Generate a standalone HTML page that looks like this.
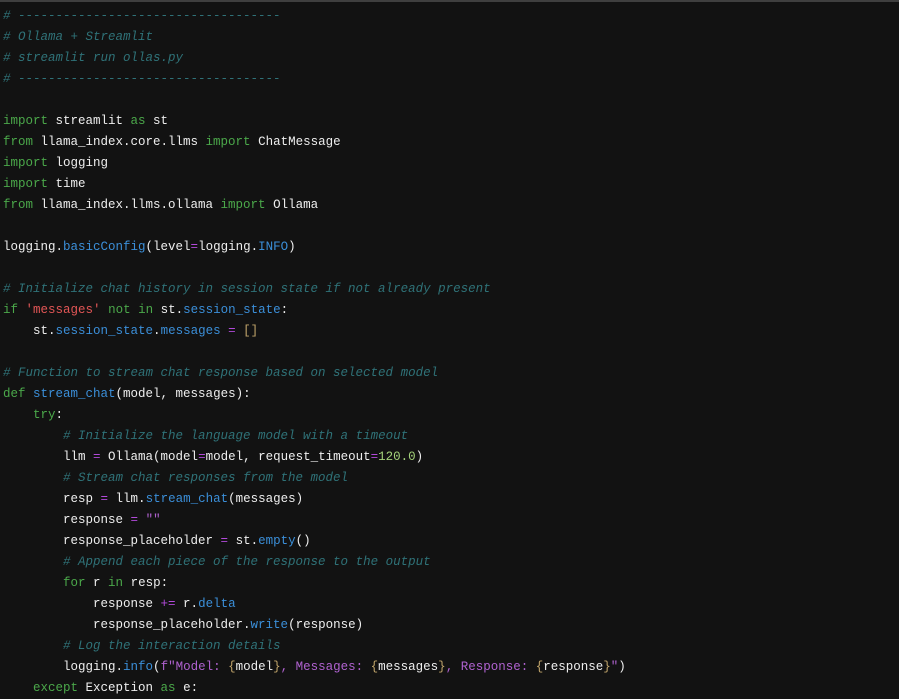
<!DOCTYPE html>
<html><head><meta charset="utf-8"><style>
html,body{margin:0;padding:0;background:#121212;width:899px;height:685px;overflow:hidden}
.top{height:2px;background:#3f3f3f}
pre{margin:0;position:absolute;left:3px;top:6px;font-family:"Liberation Mono",monospace;font-size:12.5px;line-height:21px;color:#eeeeee;letter-spacing:0}
.c{color:#2f7278;font-style:italic}
.k{color:#4ba84a}
.f{color:#3b8fd9}
.o{color:#b24ad9}
.s{color:#e25656}
.p{color:#b062d0}
.n{color:#a4d27a}
.b{color:#c0a46a}
</style></head><body><div class="top"></div><pre><span class="c"># -----------------------------------</span>
<span class="c"># Ollama + Streamlit</span>
<span class="c"># streamlit run ollas.py</span>
<span class="c"># -----------------------------------</span>

<span class="k">import</span> streamlit <span class="k">as</span> st
<span class="k">from</span> llama_index.core.llms <span class="k">import</span> ChatMessage
<span class="k">import</span> logging
<span class="k">import</span> time
<span class="k">from</span> llama_index.llms.ollama <span class="k">import</span> Ollama

logging.<span class="f">basicConfig</span>(level<span class="o">=</span>logging.<span class="f">INFO</span>)

<span class="c"># Initialize chat history in session state if not already present</span>
<span class="k">if</span> <span class="s">'messages'</span> <span class="k">not in</span> st.<span class="f">session_state</span>:
    st.<span class="f">session_state</span>.<span class="f">messages</span> <span class="o">=</span> <span class="b">[]</span>

<span class="c"># Function to stream chat response based on selected model</span>
<span class="k">def</span> <span class="f">stream_chat</span>(model, messages):
    <span class="k">try</span>:
        <span class="c"># Initialize the language model with a timeout</span>
        llm <span class="o">=</span> Ollama(model<span class="o">=</span>model, request_timeout<span class="o">=</span><span class="n">120.0</span>)
        <span class="c"># Stream chat responses from the model</span>
        resp <span class="o">=</span> llm.<span class="f">stream_chat</span>(messages)
        response <span class="o">=</span> <span class="p">""</span>
        response_placeholder <span class="o">=</span> st.<span class="f">empty</span>()
        <span class="c"># Append each piece of the response to the output</span>
        <span class="k">for</span> r <span class="k">in</span> resp:
            response <span class="o">+=</span> r.<span class="f">delta</span>
            response_placeholder.<span class="f">write</span>(response)
        <span class="c"># Log the interaction details</span>
        logging.<span class="f">info</span>(<span class="p">f"Model: </span><span class="b">{</span>model<span class="b">}</span><span class="p">, Messages: </span><span class="b">{</span>messages<span class="b">}</span><span class="p">, Response: </span><span class="b">{</span>response<span class="b">}</span><span class="p">"</span>)
    <span class="k">except</span> Exception <span class="k">as</span> e:
</pre></body></html>
